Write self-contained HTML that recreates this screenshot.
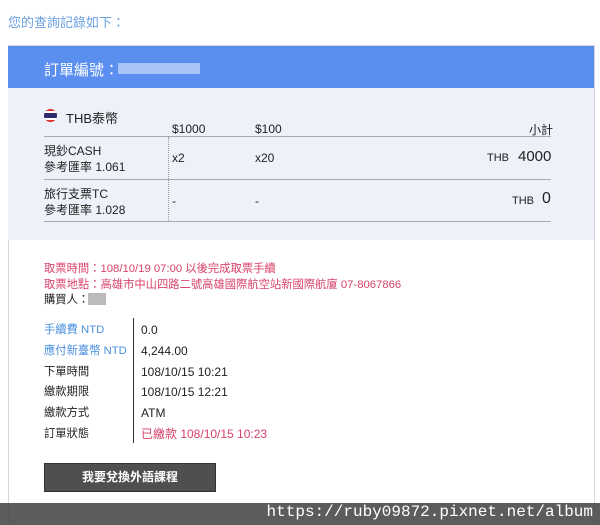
<!DOCTYPE html>
<html><head><meta charset="utf-8"><style>
*{margin:0;padding:0;box-sizing:border-box}
body{width:600px;height:525px;background:#fff;font-family:"Liberation Sans","Noto Sans CJK TC",sans-serif;position:relative;overflow:hidden;color:#222}
.a{position:absolute;white-space:nowrap}
.card{position:absolute;left:8px;top:45px;width:587px;height:480px;border:1px solid #d8d8d8;border-bottom:none}
.red{color:#d9426a}
.blue{color:#4a8fe0}
</style></head><body>
<div class="a" style="left:8px;top:12px;font-size:13px;color:#6aa0e0">您的查詢記錄如下：</div>
<div class="card"></div>
<div class="a" style="left:8px;top:46px;width:586px;height:42px;background:#5a8ff0"></div>
<div class="a" style="left:44px;top:59px;font-size:15px;color:#fff">訂單編號：</div>
<div class="a" style="left:118px;top:63px;width:82px;height:11px;background:#b6cdf6;opacity:.85"></div>
<div class="a" style="left:8px;top:88px;width:586px;height:152px;background:#edf1f9"></div>
<div class="a" style="left:44px;top:109px;width:13px;height:13px;border-radius:50%;overflow:hidden;background:#e03030">
 <div style="position:absolute;left:0;top:2px;width:13px;height:9px;background:#fff"></div>
 <div style="position:absolute;left:0;top:4px;width:13px;height:5px;background:#2d2a6e"></div>
</div>
<div class="a" style="left:66px;top:108px;font-size:13px">THB泰幣</div>
<div class="a" style="left:172px;top:122px;font-size:12px">$1000</div>
<div class="a" style="left:255px;top:122px;font-size:12px">$100</div>
<div class="a" style="left:529px;top:121px;font-size:12px">小計</div>
<div class="a" style="left:44px;top:136px;width:507px;height:1px;background:#aaa"></div>
<div class="a" style="left:44px;top:179px;width:507px;height:1px;background:#aaa"></div>
<div class="a" style="left:44px;top:221px;width:507px;height:1px;background:#aaa"></div>
<div class="a" style="left:168px;top:137px;width:0;height:84px;border-left:1px dotted #999"></div>
<div class="a" style="left:44px;top:143px;font-size:12px;line-height:16px">現鈔CASH<br>參考匯率 1.061</div>
<div class="a" style="left:172px;top:151px;font-size:12px">x2</div>
<div class="a" style="left:255px;top:151px;font-size:12px">x20</div>
<div class="a" style="left:487px;top:152px;font-size:11px">THB</div>
<div class="a" style="left:518px;top:148px;font-size:15px">4000</div>
<div class="a" style="left:44px;top:186px;font-size:12px;line-height:16px">旅行支票TC<br>參考匯率 1.028</div>
<div class="a" style="left:172px;top:194px;font-size:12px">-</div>
<div class="a" style="left:255px;top:194px;font-size:12px">-</div>
<div class="a" style="left:512px;top:195px;font-size:11px">THB</div>
<div class="a" style="left:542px;top:190px;font-size:16px">0</div>
<div class="a red" style="left:44px;top:260px;font-size:11.3px">取票時間：108/10/19 07:00 以後完成取票手續</div>
<div class="a red" style="left:44px;top:276px;font-size:11.3px">取票地點：高雄市中山四路二號高雄國際航空站新國際航廈 07-8067866</div>
<div class="a" style="left:44px;top:291px;font-size:11.3px">購買人：</div>
<div class="a" style="left:88px;top:293px;width:18px;height:12px;background:#bbb"></div>
<div class="a" style="left:133px;top:318px;width:1px;height:125px;background:#333"></div>
<div class="a" style="left:44px;top:320px;font-size:11.3px;line-height:20.8px"><span class="blue">手續費 NTD</span><br><span class="blue">應付新臺幣 NTD</span><br>下單時間<br>繳款期限<br>繳款方式<br>訂單狀態</div>
<div class="a" style="left:141px;top:320px;font-size:12px;line-height:20.8px">0.0<br>4,244.00<br>108/10/15 10:21<br>108/10/15 12:21<br>ATM<br><span class="red">已繳款 108/10/15 10:23</span></div>
<div class="a" style="left:44px;top:463px;width:172px;height:29px;background:#4f4f4f;border:1px solid #333;color:#fff;font-size:12px;font-weight:bold;text-align:center;line-height:27px">我要兌換外語課程</div>
<div class="a" style="left:0;top:503px;width:600px;height:22px;background:rgba(70,70,70,.88)"></div>
<div class="a" style="right:7px;top:503px;font-family:'Liberation Mono',monospace;font-size:16px;color:#fff">https://ruby09872.pixnet.net/album</div>
</body></html>
